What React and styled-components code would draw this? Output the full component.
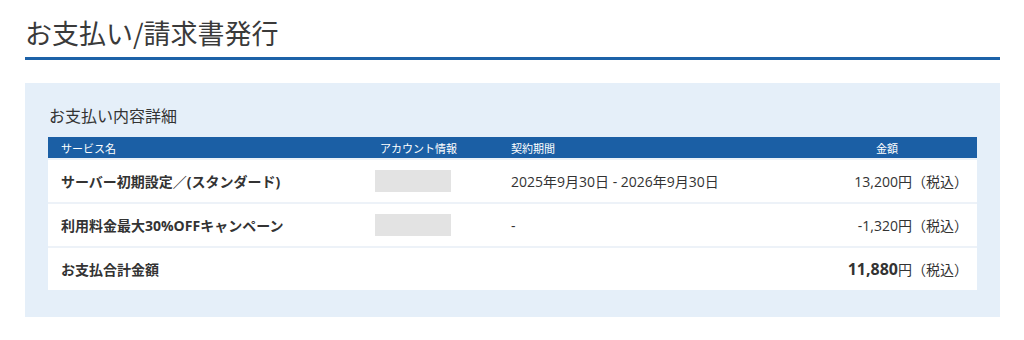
import React from 'react'
import styled, { createGlobalStyle } from 'styled-components'

const Global = createGlobalStyle`
  body {
    margin: 0;
    background: #fff;
    font-family: "Open Sans", "Noto Sans CJK JP", sans-serif;
    color: #333;
  }
`

const Page = styled.div`
  width: 975px;
  padding: 13px 0 0 25px;
`

const Title = styled.h1`
  margin: 0;
  font-family: "Noto Sans CJK JP", sans-serif;
  font-size: 27px;
  font-weight: 400;
  line-height: 39px;
  padding-bottom: 5px;
  color: #3a3a3a;
  border-bottom: 3px solid #1d62a8;
`

const Panel = styled.section`
  margin-top: 23px;
  background: #e5eff9;
  padding: 22px 23px 27px;
`

const Subtitle = styled.h2`
  margin: 0 0 11px 1px;
  font-family: "Noto Sans CJK JP", sans-serif;
  font-size: 16px;
  font-weight: 400;
  line-height: 21px;
  color: #333;
`

const Table = styled.div`
  background: #fff;
`

const Row = styled.div`
  display: grid;
  grid-template-columns: 319px 131px 1fr 180px;
  align-items: center;
  height: ${p => (p.$head ? '21px' : '42px')};
  background: ${p => (p.$head ? '#1b5fa5' : '#fff')};
  color: ${p => (p.$head ? '#fff' : '#333')};
  font-family: ${p => (p.$head ? '"Noto Sans CJK JP", sans-serif' : 'inherit')};
  font-size: ${p => (p.$head ? '11px' : '14px')};
  & + & {
    border-top: ${p => (p.$head ? 'none' : '2px solid #edf2f8')};
  }
`

const Cell = styled.div`
  padding: ${p => (p.$right ? '0 9px 0 0' : p.$center ? '0' : '0 0 0 13px')};
  text-align: ${p => (p.$right ? 'right' : p.$center ? 'center' : 'left')};
  font-weight: ${p => (p.$bold ? 700 : 400)};
  white-space: nowrap;
`

const Masked = styled.div`
  width: 76px;
  height: 22px;
  margin-left: 8px;
  background: #e3e3e3;
`

const Total = styled.b`
  font-weight: 700;
  font-size: 16px;
`

const rows = [
  { name: 'サーバー初期設定／(スタンダード)', term: '2025年9月30日 - 2026年9月30日', price: '13,200' },
  { name: '利用料金最大30%OFFキャンペーン', term: '-', price: '-1,320' },
]

export default function App() {
  return (
    <Page>
      <Global />
      <Title>お支払い/請求書発行</Title>
      <Panel>
        <Subtitle>お支払い内容詳細</Subtitle>
        <Table>
          <Row $head>
            <Cell>サービス名</Cell>
            <Cell>アカウント情報</Cell>
            <Cell>契約期間</Cell>
            <Cell $center>金額</Cell>
          </Row>
          {rows.map(r => (
            <Row key={r.name}>
              <Cell $bold>{r.name}</Cell>
              <div><Masked /></div>
              <Cell>{r.term}</Cell>
              <Cell $right>{r.price}円（税込）</Cell>
            </Row>
          ))}
          <Row>
            <Cell $bold>お支払合計金額</Cell>
            <div />
            <div />
            <Cell $right><Total>11,880</Total>円（税込）</Cell>
          </Row>
        </Table>
      </Panel>
    </Page>
  )
}
